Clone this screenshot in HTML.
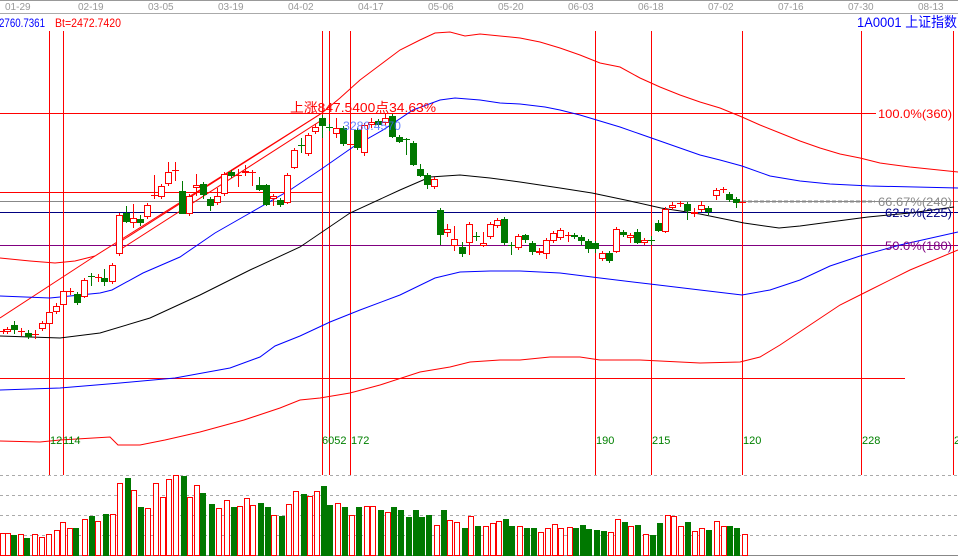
<!DOCTYPE html>
<html><head><meta charset="utf-8"><style>
html,body{margin:0;padding:0;background:#fff;}
body{width:958px;height:556px;overflow:hidden;position:relative;font-family:"Liberation Sans","Noto Sans CJK SC",sans-serif;}
svg{position:absolute;left:0;top:0;}
text{font-family:"Liberation Sans","Noto Sans CJK SC",sans-serif;}
</style></head><body>
<svg id="s" width="958" height="556" viewBox="0 0 958 556" xmlns="http://www.w3.org/2000/svg" shape-rendering="crispEdges">
<line x1="0" y1="0.5" x2="958" y2="0.5" stroke="#999"/>
<line x1="0" y1="13.5" x2="958" y2="13.5" stroke="#aaa"/>
<g font-size="10" fill="#999">
<text x="5" y="10">01-29</text><text x="78" y="10">02-19</text><text x="148" y="10">03-05</text><text x="218" y="10">03-19</text><text x="288" y="10">04-02</text><text x="358" y="10">04-17</text><text x="428" y="10">05-06</text><text x="498" y="10">05-20</text><text x="568" y="10">06-03</text><text x="638" y="10">06-18</text><text x="708" y="10">07-02</text><text x="778" y="10">07-16</text><text x="848" y="10">07-30</text><text x="918" y="10">08-13</text>
</g>
<text x="-1" y="27" font-size="12" fill="#0000ff" textLength="46" lengthAdjust="spacingAndGlyphs">2760.7361</text>
<text x="55" y="27" font-size="12" fill="#ff0000" textLength="66" lengthAdjust="spacingAndGlyphs">Bt=2472.7420</text>
<text x="857" y="27" font-size="14" fill="#0000ff" textLength="100" lengthAdjust="spacingAndGlyphs">1A0001  上证指数</text>
<line x1="0" y1="113.5" x2="876" y2="113.5" stroke="#f00"/>
<line x1="0" y1="192.5" x2="322" y2="192.5" stroke="#f00"/>
<line x1="0" y1="201.5" x2="958" y2="201.5" stroke="#888"/>
<line x1="742" y1="201.5" x2="875" y2="201.5" stroke="#888" stroke-width="2" stroke-dasharray="4,2"/>
<line x1="0" y1="212.5" x2="958" y2="212.5" stroke="#000080"/>
<line x1="0" y1="245.5" x2="958" y2="245.5" stroke="#800080"/>
<line x1="0" y1="378.5" x2="905" y2="378.5" stroke="#f00"/>
<g stroke="#f00">
<line x1="49.5" y1="31" x2="49.5" y2="475"/><line x1="63.5" y1="31" x2="63.5" y2="475"/>
<line x1="322.5" y1="31" x2="322.5" y2="475"/><line x1="329.5" y1="31" x2="329.5" y2="475"/>
<line x1="350.5" y1="31" x2="350.5" y2="475"/><line x1="595.5" y1="31" x2="595.5" y2="475"/>
<line x1="651.5" y1="31" x2="651.5" y2="475"/><line x1="742.5" y1="31" x2="742.5" y2="475"/>
<line x1="861.5" y1="31" x2="861.5" y2="475"/><line x1="953.5" y1="31" x2="953.5" y2="475"/>
</g>
<g fill="none" stroke-width="1" shape-rendering="auto">
<polyline stroke="#f00" points="0,258 30,261 55,263 75,261 95,256 322,113 340,98 360,80 380,65 400,50 420,40 435,33 450,32 465,36 480,34 500,36 520,38 540,42 560,48 580,55 600,63 620,67 640,78 660,87 680,95 700,102 720,108 742,117 760,125 780,133 800,141 820,148 840,154 860,158 880,163 910,167 958,172"/>
<polyline stroke="#f00" points="0,318 95,256"/>
<polyline stroke="#f00" points="115,245 322,113"/>
<polyline stroke="#f00" points="118,251 325,118"/>
<polyline stroke="#00f" points="0,296 50,298 100,293 112,290 143,273 180,257 215,233 250,213 290,190 320,170 353,147 383,130 413,110 440,100 455,98 480,100 500,103 520,104 545,107 560,110 580,115 600,121 620,127 640,134 660,141 680,148 700,155 720,160 742,166 770,176 800,181 830,184 870,186 958,188"/>
<polyline stroke="#000" points="0,336 60,338 100,333 150,318 200,295 250,270 300,247 350,213 400,190 430,177 460,175 490,178 520,182 560,188 592,193 630,201 661,208 700,214 744,223 779,228 800,226 830,222 868,217 910,213 954,207"/>
<polyline stroke="#00f" points="0,390 60,388 120,383 175,378 230,368 260,357 275,346 300,336 330,322 360,310 400,295 435,278 460,272 490,271 520,271 560,273 600,278 650,284 700,290 742,295 770,290 800,280 830,266 860,256 900,245 958,232"/>
<polyline stroke="#f00" points="0,441 40,442 60,440 110,437 118,445 140,445 165,440 200,432 244,420 280,408 300,400 320,398 350,393 380,385 420,372 450,367 470,362 500,360 520,360 550,357 580,357 600,360 640,360 680,362 700,363 740,362 760,357 780,345 810,325 840,305 870,290 910,270 958,250"/>
</g>
<g id="candles"></g>
<text x="290" y="112" font-size="13" fill="#ff0000" textLength="146" lengthAdjust="spacingAndGlyphs">上涨847.5400点34.63%</text>
<text x="343" y="130" font-size="12" fill="#4466ff" fill-opacity="0.8" textLength="58" lengthAdjust="spacingAndGlyphs">3280.4570</text>
<text x="878" y="118" font-size="12" fill="#ff0000" textLength="74" lengthAdjust="spacingAndGlyphs">100.0%(360)</text>
<text x="878" y="206" font-size="12" fill="#888" textLength="74" lengthAdjust="spacingAndGlyphs">66.67%(240)</text>
<text x="885" y="217" font-size="12" fill="#000080" textLength="67" lengthAdjust="spacingAndGlyphs">62.5%(225)</text>
<text x="885" y="250" font-size="12" fill="#800080" textLength="67" lengthAdjust="spacingAndGlyphs">50.0%(180)</text>
<g font-size="11" fill="#008000">
<text x="50" y="444">12</text><text x="63" y="444">114</text><text x="322" y="444">6052</text><text x="351" y="444">172</text><text x="596" y="444">190</text><text x="652" y="444">215</text><text x="743" y="444">120</text><text x="862" y="444">228</text><text x="954" y="444">2</text>
</g>
<g stroke="#aaa" stroke-dasharray="3,3">
<line x1="0" y1="475.5" x2="958" y2="475.5"/><line x1="0" y1="495.5" x2="958" y2="495.5"/>
<line x1="0" y1="515.5" x2="958" y2="515.5"/><line x1="0" y1="535.5" x2="958" y2="535.5"/>
</g>
<line x1="0" y1="555.5" x2="958" y2="555.5" stroke="#888"/>
<g id="vol"></g>
</svg>
<script>
var NS="http://www.w3.org/2000/svg";
function el(p,t,a){var e=document.createElementNS(NS,t);for(var k in a)e.setAttribute(k,a[k]);p.appendChild(e);}
var C=[[3,331,331,329,333,'r'],[7,329,331,327,333,'r'],[14,325,329,321,333,'g'],[21,331,331,328,335,'r'],[28,333,336,330,338,'g'],[35,334,334,330,338,'r'],[42,323,328,321,330,'r'],[49,312,323,310,325,'r'],[56,306,311,303,313,'r'],[63,291,304,289,306,'r'],[70,291,291,288,294,'r'],[77,294,302,292,304,'g'],[84,280,296,278,297,'r'],[91,276,276,273,285,'g'],[98,277,277,274,281,'r'],[104,278,281,269,285,'g'],[112,265,281,263,283,'r'],[119,215,253,213,255,'r'],[126,213,221,206,222,'g'],[133,218,222,204,227,'r'],[140,219,222,215,225,'g'],[147,205,216,203,218,'r'],[154,195,195,175,198,'r'],[161,186,196,184,198,'r'],[168,172,183,162,185,'r'],[175,170,170,162,180,'r'],[182,191,213,181,213,'g'],[189,196,213,194,215,'r'],[196,185,187,174,195,'r'],[203,184,194,182,198,'g'],[210,199,205,197,210,'g'],[217,196,202,188,204,'r'],[224,174,193,172,195,'r'],[231,172,175,170,177,'g'],[238,175,175,169,186,'r'],[245,171,172,165,175,'r'],[252,172,172,170,185,'r'],[259,185,189,177,190,'g'],[266,185,204,184,205,'g'],[273,196,198,194,205,'r'],[280,200,204,198,206,'g'],[287,175,202,173,203,'r'],[294,150,167,148,168,'r'],[301,145,145,138,152,'g'],[308,135,153,133,155,'r'],[315,127,131,124,133,'r'],[322,118,125,115,137,'g'],[329,127,127,124,130,'g'],[336,128,133,118,137,'r'],[343,128,143,126,145,'g'],[350,144,144,141,147,'r'],[357,130,147,128,149,'g'],[364,125,152,123,155,'r'],[371,122,124,118,127,'r'],[378,121,124,119,126,'g'],[385,118,122,113,124,'r'],[392,116,136,114,137,'g'],[399,137,141,135,142,'g'],[406,139,139,138,154,'g'],[413,143,164,141,165,'g'],[420,169,175,164,176,'g'],[427,175,184,173,188,'g'],[434,179,186,177,188,'r'],[440,210,234,208,244,'g'],[447,229,232,224,236,'r'],[454,239,245,226,250,'r'],[462,247,253,242,256,'g'],[469,224,242,222,254,'r'],[476,236,236,232,240,'g'],[483,243,245,232,246,'r'],[490,224,236,222,238,'r'],[497,220,225,218,227,'r'],[504,219,242,217,244,'g'],[511,245,245,242,254,'g'],[518,236,247,234,249,'r'],[525,235,239,234,242,'g'],[532,243,251,241,254,'g'],[539,251,252,248,254,'r'],[546,240,253,238,258,'r'],[553,233,240,231,242,'r'],[560,230,237,228,239,'r'],[568,235,235,232,241,'r'],[574,235,236,233,238,'g'],[581,237,240,235,244,'g'],[588,241,248,239,252,'g'],[595,243,248,241,252,'g'],[602,253,258,251,260,'r'],[609,253,260,251,262,'g'],[616,229,251,227,252,'r'],[623,232,234,230,236,'g'],[630,235,237,233,242,'r'],[637,232,242,229,243,'g'],[644,240,242,238,244,'r'],[651,240,240,236,244,'g'],[658,223,230,220,231,'g'],[665,209,231,207,232,'r'],[672,205,207,202,209,'r'],[680,203,203,201,206,'r'],[687,204,210,202,219,'g'],[694,212,213,208,216,'r'],[701,205,209,201,211,'r'],[708,208,211,206,214,'g'],[716,190,195,188,199,'r'],[723,189,189,187,192,'r'],[729,194,199,192,201,'g'],[736,199,202,197,207,'g'],[742,202,202,201,203,'r']];
var g=document.getElementById('candles');
C.forEach(function(c){var x=c[0],col=c[5]=='r'?'#ff0000':'#007800';
 var t=Math.min(c[1],c[2]),b=Math.max(c[1],c[2]);
 el(g,'line',{x1:x+.5,y1:c[3],x2:x+.5,y2:c[4]+1,stroke:col});
 if(b-t<1){el(g,'line',{x1:x-3,y1:t+.5,x2:x+4,y2:t+.5,stroke:col});}
 else if(c[5]=='r'){el(g,'rect',{x:x-2.5,y:t+.5,width:6,height:b-t,fill:'#fff',stroke:col});}
 else{el(g,'rect',{x:x-3,y:t,width:7,height:b-t+1,fill:col});}
});
var V=[[0,340,'r'],[8,340,'r'],[18,345,'g'],[30,343,'r'],[40,354,'g'],[52,343,'r'],[64,351,'r'],[76,343,'r'],[88,330,'r'],[98,307,'r'],[110,324,'r'],[120,324,'g'],[134,297,'r'],[146,288,'g'],[156,303,'r'],[168,282,'g'],[180,283,'r'],[192,189,'r'],[204,174,'g'],[214,211,'r'],[226,261,'g'],[238,264,'r'],[250,189,'r'],[262,232,'r'],[272,178,'r'],[284,166,'r'],[296,168,'g'],[306,232,'r'],[318,196,'r'],[328,219,'g'],[342,252,'g'],[354,264,'r'],[366,241,'r'],[378,261,'g'],[388,258,'r'],[400,235,'r'],[410,256,'r'],[422,249,'g'],[434,261,'g'],[444,286,'r'],[456,288,'g'],[468,252,'r'],[480,214,'r'],[492,222,'g'],[502,229,'r'],[514,213,'r'],[526,198,'g'],[536,255,'g'],[548,250,'r'],[560,261,'g'],[572,286,'r'],[582,261,'g'],[596,259,'r'],[606,259,'r'],[618,270,'g'],[630,276,'r'],[640,261,'g'],[652,270,'g'],[664,291,'g'],[676,270,'g'],[686,291,'g'],[698,285,'g'],[710,316,'r'],[722,270,'g'],[732,300,'r'],[744,307,'r'],[756,324,'g'],[766,289,'r'],[778,318,'g'],[790,319,'r'],[802,310,'r'],[812,303,'r'],[824,297,'g'],[834,318,'g'],[846,319,'r'],[858,324,'g'],[870,324,'g'],[880,337,'r'],[892,324,'r'],[904,313,'r'],[914,324,'r'],[928,322,'r'],[938,324,'g'],[950,315,'g'],[960,327,'g'],[972,329,'g'],[984,333,'g'],[996,337,'r'],[1006,297,'r'],[1018,306,'g'],[1028,319,'r'],[1040,315,'g'],[1052,343,'r'],[1064,345,'g'],[1076,309,'g'],[1088,286,'r'],[1098,289,'r'],[1110,319,'r'],[1122,306,'g'],[1132,334,'r'],[1144,324,'r'],[1156,330,'g'],[1168,303,'r'],[1180,319,'r'],[1190,318,'g'],[1202,324,'g'],[1214,343,'r']];
var gv=document.getElementById('vol');
V.forEach(function(v){var x=Math.round(v[0]/1.637),t=Math.round(420+v[1]/3);
 if(v[2]=='r')el(gv,'rect',{x:x+.5,y:t+.5,width:5,height:555-t,fill:'#fff',stroke:'#ff0000'});
 else el(gv,'rect',{x:x,y:t,width:6,height:556-t,fill:'#007800'});
});
</script>
</body></html>
